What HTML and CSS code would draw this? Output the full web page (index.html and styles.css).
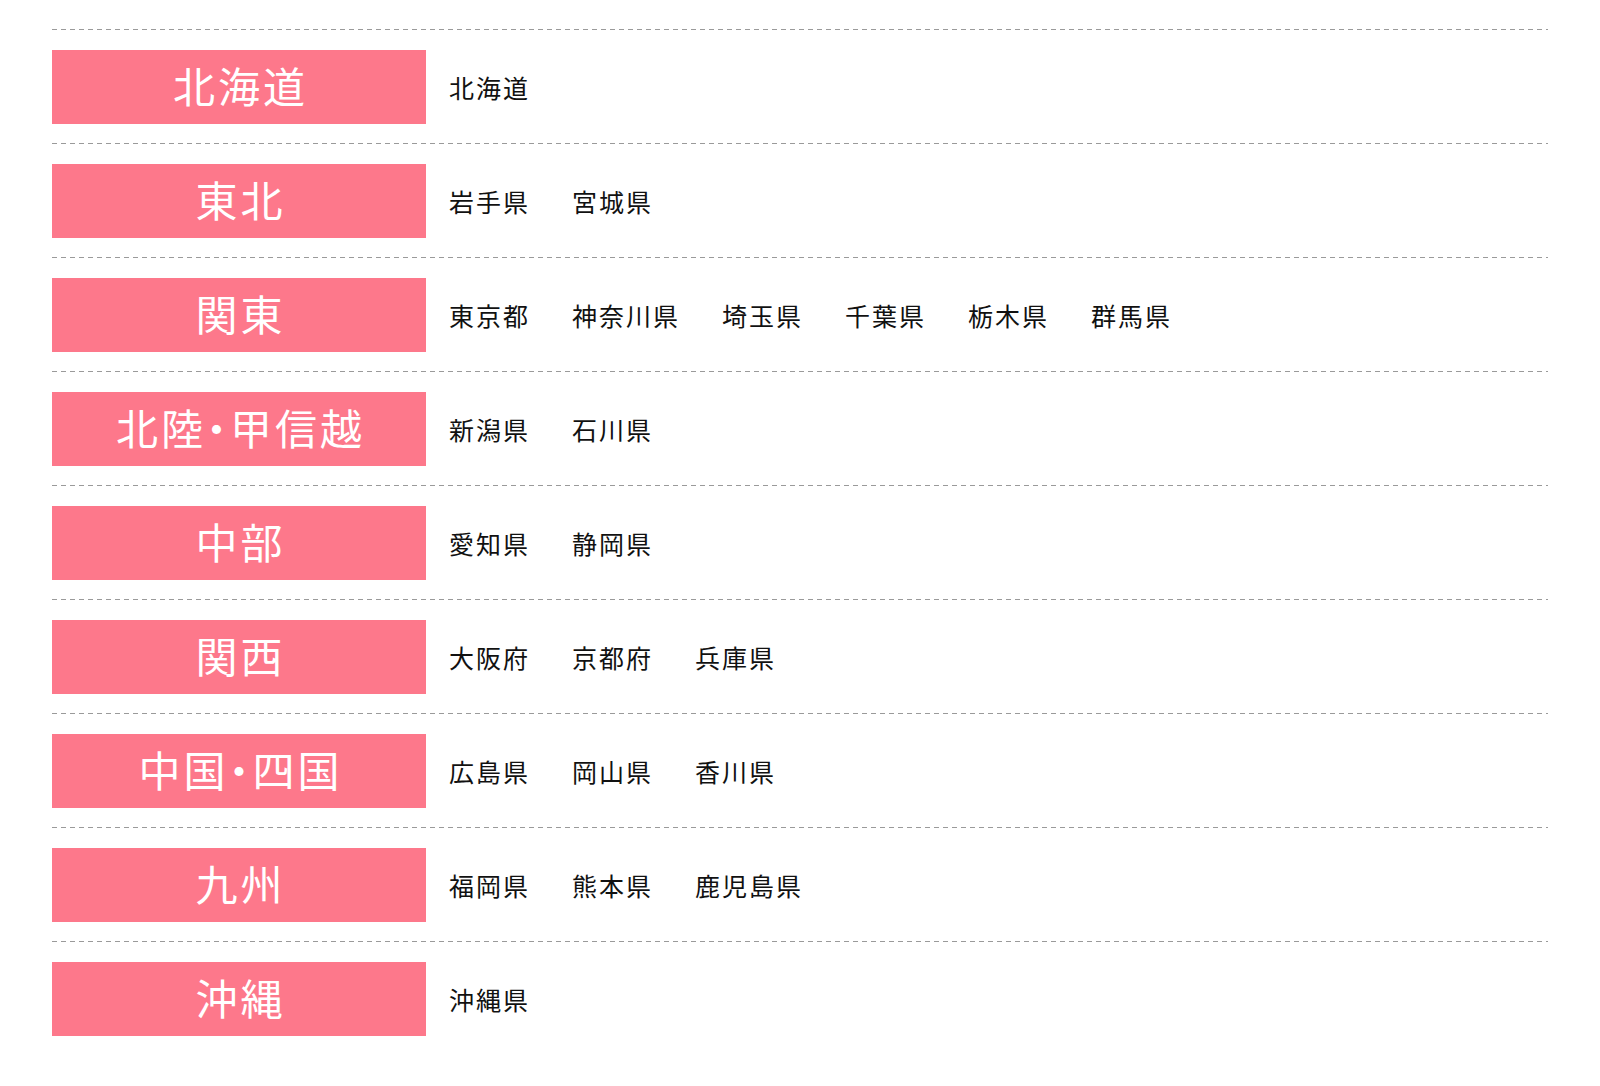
FILE: index.html
```html
<!DOCTYPE html>
<html lang="ja">
<head>
<meta charset="utf-8">
<title>エリア一覧</title>
<link rel="stylesheet" href="styles.css">
</head>
<body>
<div class="areas">
  <div class="area">
    <div class="area-name">北海道</div>
    <ul class="prefs"><li>北海道</li></ul>
  </div>
  <div class="area">
    <div class="area-name">東北</div>
    <ul class="prefs"><li>岩手県</li><li>宮城県</li></ul>
  </div>
  <div class="area">
    <div class="area-name">関東</div>
    <ul class="prefs"><li>東京都</li><li>神奈川県</li><li>埼玉県</li><li>千葉県</li><li>栃木県</li><li>群馬県</li></ul>
  </div>
  <div class="area">
    <div class="area-name">北陸・甲信越</div>
    <ul class="prefs"><li>新潟県</li><li>石川県</li></ul>
  </div>
  <div class="area">
    <div class="area-name">中部</div>
    <ul class="prefs"><li>愛知県</li><li>静岡県</li></ul>
  </div>
  <div class="area">
    <div class="area-name">関西</div>
    <ul class="prefs"><li>大阪府</li><li>京都府</li><li>兵庫県</li></ul>
  </div>
  <div class="area">
    <div class="area-name">中国・四国</div>
    <ul class="prefs"><li>広島県</li><li>岡山県</li><li>香川県</li></ul>
  </div>
  <div class="area">
    <div class="area-name">九州</div>
    <ul class="prefs"><li>福岡県</li><li>熊本県</li><li>鹿児島県</li></ul>
  </div>
  <div class="area">
    <div class="area-name">沖縄</div>
    <ul class="prefs"><li>沖縄県</li></ul>
  </div>
</div>
</body>
</html>
```

FILE: styles.css
```css
html, body {
  margin: 0;
  padding: 0;
  background: #ffffff;
}

body {
  font-family: "Noto Sans CJK JP", "Noto Sans", sans-serif;
  color: #111;
}

.areas {
  width: 1496px;
  margin: 29px auto 0;
}

.area {
  display: flex;
  align-items: center;
  gap: 23px;
  padding: 20px 0 19px;
  background-image: repeating-linear-gradient(to right, #9a9a9a 0 5px, transparent 5px 9px);
  background-size: 100% 1px;
  background-repeat: no-repeat;
  background-position: 0 0;
  border-top: 1px solid transparent;
  background-origin: border-box;
}

.area:last-child {
  position: relative;
}

.area:last-child::after {
  content: "";
  position: absolute;
  left: 0;
  right: 0;
  bottom: -1px;
  height: 1px;
  background-image: repeating-linear-gradient(to right, #9a9a9a 0 5px, transparent 5px 9px);
}

.area-name {
  flex: 0 0 auto;
  width: 374px;
  height: 74px;
  background: #fd788b;
  color: #fff;
  font-size: 42px;
  letter-spacing: 3px;
  padding: 0 0 4px 3px;
  box-sizing: border-box;
  font-feature-settings: "palt";
  display: flex;
  align-items: center;
  justify-content: center;
  line-height: 1;
}

.prefs {
  list-style: none;
  margin: 0;
  padding: 0;
  display: flex;
  gap: 42px;
  font-size: 25px;
  letter-spacing: 2px;
  line-height: 1;
}
```
